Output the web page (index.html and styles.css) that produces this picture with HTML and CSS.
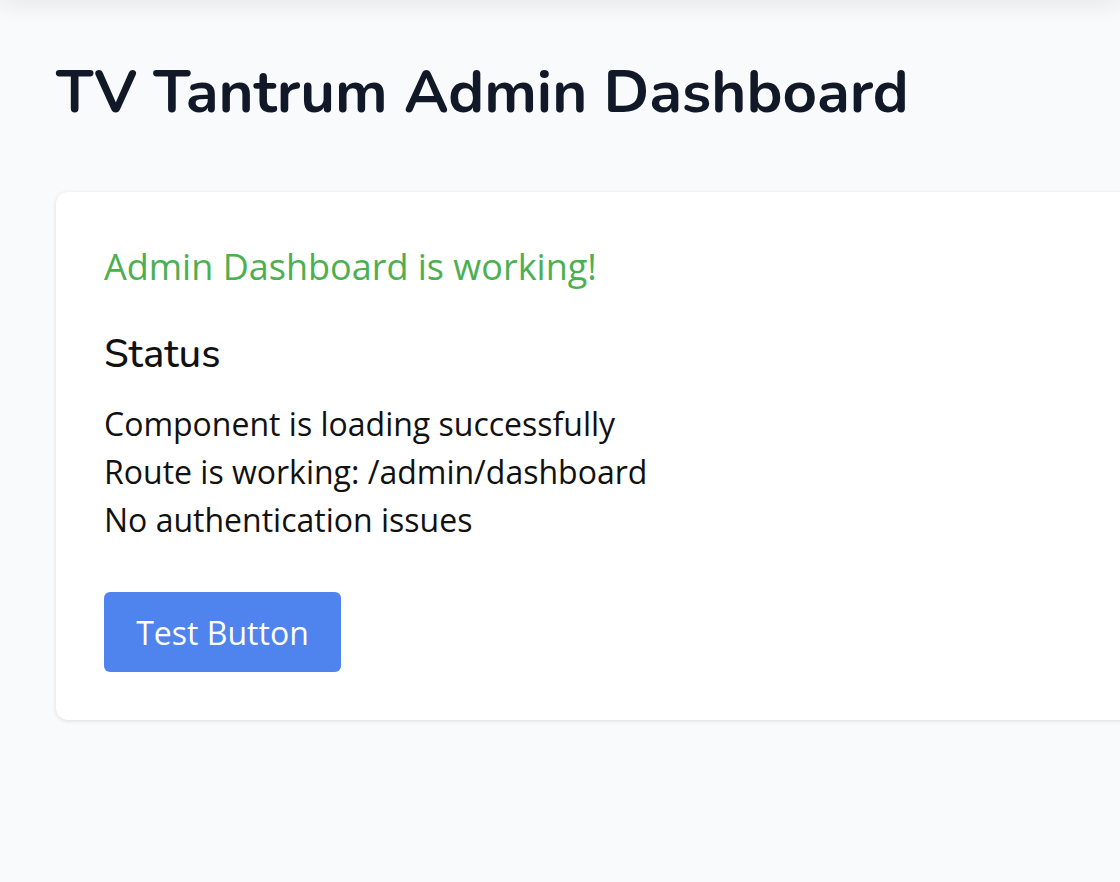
FILE: index.html
```html
<!DOCTYPE html>
<html lang="en">
<head>
<meta charset="utf-8">
<title>TV Tantrum Admin Dashboard</title>
<link rel="stylesheet" href="styles.css">
</head>
<body>
<div class="topbar"></div>
<main class="page">
  <h1 class="title">TV Tantrum Admin Dashboard</h1>
  <section class="card">
    <p class="ok">Admin Dashboard is working!</p>
    <h2 class="status">Status</h2>
    <ul class="list">
      <li>Component is loading successfully</li>
      <li>Route is working: /admin/dashboard</li>
      <li>No authentication issues</li>
    </ul>
    <button class="btn" type="button">Test Button</button>
  </section>
</main>
</body>
</html>
```

FILE: styles.css
```css
html, body {
  margin: 0;
  padding: 0;
  overflow: hidden;
}
body {
  background: #f9fafb;
  font-family: "Open Sans", "Noto Sans", sans-serif;
  color: #111;
  width: 1120px;
  height: 882px;
  position: relative;
}
.topbar {
  position: absolute;
  left: 0;
  right: 0;
  top: -20px;
  height: 20px;
  box-shadow: 0 4px 24px rgba(0, 0, 0, 0.09);
}
.page {
  padding: 54px 0 0 56px;
}
.title {
  margin: 0;
  font-family: "Nunito", "Lato", sans-serif;
  font-weight: 700;
  font-size: 60px;
  line-height: 76px;
  color: #111827;
}
.card {
  margin-top: 62px;
  width: 1200px;
  box-sizing: border-box;
  background: #fff;
  border-radius: 12px;
  box-shadow: 0 1px 4px rgba(0, 0, 0, 0.12);
  padding: 48px;
}
.ok {
  margin: 0;
  color: #4caf50;
  font-size: 36px;
  line-height: 54px;
}
.status {
  margin: 36px 0 0;
  font-family: "Nunito", "Lato", sans-serif;
  font-weight: 500;
  font-size: 40px;
  line-height: 48px;
  color: #111;
}
.list {
  list-style: none;
  margin: 22px 0 0;
  padding: 0;
  font-size: 32px;
  line-height: 48px;
}
.btn {
  margin-top: 48px;
  display: block;
  width: 237px;
  height: 80px;
  border: 0;
  border-radius: 6px;
  background: #4f83ee;
  color: #fff;
  font-family: "Open Sans", sans-serif;
  font-size: 32px;
}
```
